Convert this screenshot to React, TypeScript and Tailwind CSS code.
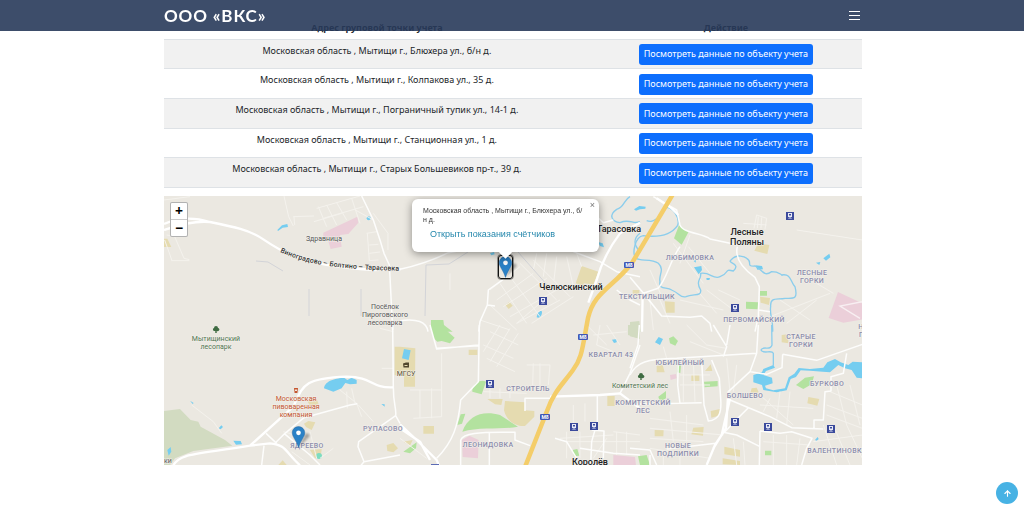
import React from "react";
import { ArrowUp } from "lucide-react";

type Shape = { d: string; c: string };
type Tile = { x: number; y: number; areas: Shape[]; minor: string; streets: string; main: string; water?: string };

const WATER = "#75cdf0";
const GREEN = "#b3e29f";
const WOOD = "#d2dbc1";
const SAND = "#e5dbb0";
const PINK = "#ebcfd9";

const tiles: Tile[] = [
  {
    x: 160,
    y: 190,
    areas: [
      { c: PINK, d: "M490 128 L592 80 L595 98 L565 132 L540 135 L545 170 L512 177 L504 150 L490 148Z" },
      { c: WATER, d: "M352 120 L366 106 L382 102 L384 111 L368 113 L354 123Z" },
      { c: WATER, d: "M620 85 a6 6 0 1 0 12 0 a6 6 0 1 0 -12 0Z" },
      { c: SAND, d: "M12 146 L22 146 L34 171 L12 171Z" },
    ],
    minor:
      "M14 150 L36 212 M20 135 L44 140 L72 205 L88 209 M34 212 L88 212 M372 18 L386 80 L400 108 M400 80 L462 78 M402 80 L404 105 M470 55 L600 18 M475 50 L500 110 M500 45 L530 105 M530 38 L560 90 M490 85 L610 50 M462 95 L545 70 M575 25 L600 100 M620 130 L650 125 M622 130 L628 212 L655 210 M640 70 L684 130 L684 180 M628 165 L655 163 M628 190 L660 186 M586 60 L640 90 M12 30 L90 20",
    streets: "M605 18 L640 90 L660 150 L672 190 L688 225 L690 260 L694 340 L698 420",
    main: "M12 102 C60 80 110 84 150 96 C220 110 270 120 310 148 C350 175 375 188 400 197 C460 222 560 235 640 240 L722 238 M12 120 C60 105 100 92 150 96",
  },
  {
    x: 400,
    y: 190,
    areas: [
      { c: SAND, d: "M545 228 L595 245 L580 284 L552 280 L548 288 L527 280Z" },
      { c: SAND, d: "M316 345 L328 335 L338 347 L326 357Z" },
      { c: WATER, d: "M410 382 C412 364 425 358 426 366 C426 376 420 386 410 382Z" },
      { c: GREEN, d: "M93 390 L130 390 L132 405 L158 425 L93 425Z" },
      { c: WATER, d: "M270 190 L282 186 L284 193 L274 196Z" },
      { c: WATER, d: "M594 156 L608 160 L612 172 L600 168Z" },
    ],
    minor:
      "M360 220 L470 330 M400 210 L510 320 M330 260 L420 380 M300 280 L380 400 M270 345 L350 420 M270 300 L360 230 M290 330 L400 250 M310 350 L440 265 M330 380 L470 300 M350 400 L480 330 M395 400 L520 320 M240 390 L330 420 M440 190 L430 260 M470 200 L462 270 M500 200 L520 290 M410 190 L400 240 M350 400 L420 340 M530 190 L545 230 M150 250 L150 300",
    streets:
      "M0 238 C60 225 110 205 145 188 L190 180 M318 262 L265 300 L262 345 L240 395 L236 425 M262 345 L285 348 M720 260 L650 245 L600 215 L520 185 M0 392 C50 385 80 395 84 425 M640 90 L610 98 L590 80 M650 300 L690 330 L720 345",
    main: "M720 98 L660 130 C630 170 605 215 590 270 L565 338",
    water: "M690 20 C670 30 675 50 650 58 C625 75 635 95 660 98 C690 85 700 105 720 95 M720 130 C700 145 700 165 720 185",
  },
  {
    x: 630,
    y: 190,
    areas: [
      { c: GREEN, d: "M147 106 L176 125 L155 164 L132 145Z" },
      { c: SAND, d: "M385 160 L418 165 L412 192 L373 182Z" },
      { c: GREEN, d: "M348 335 L384 337 L383 358 L348 356Z M390 303 L411 303 L411 317 L390 317Z" },
      { c: SAND, d: "M390 320 L420 324 L417 345 L392 338Z M104 334 L134 336 L134 368 L108 368Z M8 300 L28 300 L28 318 L8 318Z" },
      { c: PINK, d: "M624 306 L697 340 L697 388 L640 398 L596 384Z" },
      { c: WATER, d: "M192 232 L214 228 L216 240 L206 253Z M376 226 L396 228 L399 238 L382 239Z M580 205 L598 191 L601 202 L588 212Z M558 218 L571 216 L568 225Z M190 212 L198 210 L197 218Z M229 264 L240 264 L238 270 L230 270Z M12 58 L28 48 L47 50 L46 56 L30 58 L18 62Z" },
      { c: WOOD, d: "M0 396 L28 393 L32 425 L0 425Z" },
    ],
    minor:
      "M372 115 L380 75 L410 85 L405 118 M385 80 L382 115 M395 82 L393 115 M340 100 L410 105 M130 160 L220 280 M175 170 L240 250 M150 330 L280 360 M200 300 L260 370 M90 330 L120 400 M230 300 L310 360 M265 300 L330 330 M420 380 L600 310 M470 400 L560 330 M60 240 L100 330 M500 120 L697 150 M610 310 L560 280 M450 330 L540 390 M180 135 L150 220 M60 330 L70 420",
    streets:
      "M70 20 L140 60 L150 105 C160 130 220 130 240 147 L325 165 M322 170 C315 200 330 230 375 262 L388 290 L385 380 L375 425 M0 262 L45 315 L95 378 L180 382 L215 378 L240 400 L245 425 M95 378 L40 310 L84 295 C110 270 120 210 150 170 M385 360 L420 365",
    main: "M38 310 L36 425 M80 25 L125 55 L145 75",
    water:
      "M18 205 C5 190 15 140 40 137 C80 142 120 140 143 106 C150 85 130 50 105 52 M50 92 C70 100 75 85 92 80 M18 205 C30 215 65 205 85 220 C105 240 85 255 90 275 C85 300 110 290 125 300 C150 310 150 325 168 320 C190 310 215 320 212 300 C195 270 215 270 212 250 C240 245 250 270 270 260 C300 250 280 235 310 243 C335 220 290 220 303 210 C320 190 345 200 350 205 C370 215 345 230 375 228 C400 240 400 262 425 245 C450 245 460 260 455 255 C485 250 480 275 495 290 C505 330 490 325 465 325 C440 330 420 320 422 350 C418 375 430 390 428 425",
  },
  {
    x: 160,
    y: 325,
    areas: [
      { c: WOOD, d: "M12 258 L60 252 L92 285 L115 290 L122 305 L195 345 L217 362 L100 378 L45 400 L30 421 L12 421Z" },
      { c: WATER, d: "M492 190 C495 165 530 160 552 158 L562 165 L575 158 L590 165 L590 176 L570 178 L556 174 L545 190 L520 200Z M220 347 L242 348 L246 358 L228 359Z M22 375 L32 366 L34 380 L26 392Z M176 310 L184 301 L189 306 L182 313Z M90 227 L101 234 L98 237Z M664 237 L674 238 L674 245Z" },
      { c: SAND, d: "M432 296 L445 288 L466 292 L455 315 L438 306Z M440 225 L470 222 L476 238 L450 242Z M450 375 L485 372 L482 398 L465 400Z M355 420 L368 406 L380 420Z M680 360 L700 354 L714 370 L700 382 L682 378Z M704 65 L720 65 L720 155 L704 150Z" },
      { c: "#7edcc0", d: "M468 393 a9 9 0 1 0 18 0 a9 9 0 1 0 -18 0Z" },
    ],
    minor:
      "M95 240 L160 290 L185 325 M540 195 L590 235 L605 275 M560 200 L562 250 M575 190 L585 235 M595 240 L640 290 M665 130 L700 130 M660 10 L700 20 M395 380 L450 420 M370 320 L440 340 M450 320 L470 400 M480 400 L520 370",
    streets:
      "M345 355 L375 325 L432 278 L570 240 L592 236 M318 325 L350 355 M372 325 L450 390 L480 420 M312 362 L305 420 M698 0 L700 187 C700 240 710 250 707 272 L720 295 M707 272 L596 350 L594 365 L612 410 L720 390 M612 410 L600 425",
    main: "M40 421 C60 385 100 390 270 362 L330 355 C380 360 375 380 420 421 M270 362 L400 245 C430 180 430 160 560 155 C640 155 630 190 700 187",
  },
  {
    x: 400,
    y: 325,
    areas: [
      { c: GREEN, d: "M92 5 L130 0 L132 10 L164 38 L150 55 L125 48 L112 50 L100 38Z M217 200 C215 180 240 160 258 170 L245 208Z M172 300 L182 268 L196 266 L186 296Z M187 320 C205 270 250 255 300 270 L354 305 C310 315 240 305 187 320Z M10 380 L50 352 L48 370 L30 385Z M518 375 L532 372 L538 392 L522 394Z" },
      { c: SAND, d: "M0 65 L46 70 L45 185 L12 185 L12 150 L0 150Z M206 74 L232 74 L232 90 L206 90Z M262 222 L308 222 L304 240 L285 238Z M315 228 L375 232 L375 256 L403 258 L403 275 L375 303 C350 305 320 290 312 256Z M70 303 L102 303 L102 326 L70 326Z M622 213 L644 213 L644 243 L622 243Z M10 350 L38 345 L30 362Z" },
      { c: WATER, d: "M12 72 L32 76 L26 105 L6 100Z M636 44 L650 42 L650 52 L642 54Z" },
      { c: PINK, d: "M186 345 L208 332 L236 345 L234 400 L188 396Z M640 390 L705 396 L708 420 L640 420Z" },
      { c: WOOD, d: "M684 0 L720 0 L720 42 L684 30Z" },
    ],
    minor:
      "M250 60 L340 100 M260 100 L345 140 M270 20 L355 60 M300 0 L250 80 M330 10 L270 110 M355 25 L290 125 M380 120 L450 120 L445 180 M400 115 L398 180 M420 115 L420 180 M250 200 L380 205 M270 190 L270 220 M300 190 L300 220 M330 190 L330 220 M30 195 L125 195 L125 275 L40 280 M60 195 L60 280 M95 190 L95 280 M125 85 L125 195 M560 0 L620 60 M600 0 L590 60 L640 80 M580 30 L680 20 M620 0 L660 60 M480 340 L640 330 M500 320 L500 400 M540 320 L540 400 M580 400 L620 340 M640 320 L720 330 M650 320 L650 390 M680 320 L680 390 M500 350 L720 350 M520 240 L520 300 M555 235 L555 290 M0 340 L80 400",
    streets:
      "M90 0 L110 72 L235 60 M238 0 L235 170 L182 225 C175 300 160 350 110 400 M235 62 L110 70 M375 258 L375 220 L450 220 M182 345 C190 325 230 320 345 322 L345 345 L390 362 M268 325 L268 420 M182 345 L182 420 M592 210 L592 290 L575 350 L572 420 M575 315 L612 318 L610 400 M540 370 L640 385 L720 390 M465 340 L500 350 L530 400 M720 60 L690 145 L660 205",
    main: "M0 298 L50 345 L110 405 L118 425 M0 310 L60 350 L90 405 M450 215 L600 210 L660 205 L720 250",
  },
  {
    x: 630,
    y: 325,
    areas: [
      { c: WATER, d: "M75 52 L86 36 L99 42 L90 60Z M370 150 L396 142 L400 132 L430 120 L435 128 L408 138 L400 150 L426 158 L428 175 L405 182 L408 190 L430 196 L465 190 L476 157 L493 146 L506 129 L540 132 L580 128 L592 112 L615 102 L632 112 L655 120 L668 110 L697 112 L697 160 L680 158 L665 135 L645 130 L625 120 L600 142 L578 140 L540 137 L512 136 L498 156 L482 162 L470 196 L440 202 L400 195 L396 180 L370 172Z M555 345 L563 336 L566 342 L560 348Z" },
      { c: GREEN, d: "M117 40 L130 34 L144 48 L136 62 L120 55Z M143 118 L153 120 L151 144 L141 142Z M222 170 L263 168 L263 184 L224 187Z M85 215 L108 198 L108 220 L90 232Z M498 180 L525 158 L552 154 L545 178 L520 192Z M405 377 L424 377 L424 391 L405 391Z M24 394 L50 390 L60 420 L30 420Z" },
      { c: SAND, d: "M455 30 L475 28 L475 55 L455 52Z M225 138 L242 118 L247 138Z M184 150 L208 150 L208 168 L184 168Z M80 122 L98 120 L104 142 L80 142Z M535 216 L568 222 L562 242 L532 235Z M365 190 L380 188 L386 202 L360 208Z M242 258 L270 252 L266 272 L244 278Z M190 308 L221 306 L219 332 L184 328Z M74 315 L101 316 L100 334 L74 334Z M283 365 L330 375 L330 395 L283 388Z M278 400 L330 408 L330 420 L278 418Z" },
      { c: PINK, d: "M120 150 L138 147 L140 160 L122 165Z M0 398 L14 400 L14 420 L0 420Z" },
      { c: WOOD, d: "M0 0 L28 0 L24 40 L0 34Z" },
    ],
    minor:
      "M100 65 L110 100 M170 0 L230 60 L290 70 M180 50 L280 90 M290 100 L300 200 M320 120 L310 200 M160 120 L160 230 M190 105 L195 230 M150 180 L240 180 M150 150 L240 150 M60 280 L220 300 M60 310 L280 330 M120 260 L130 350 M170 270 L170 350 M60 340 L220 350 M390 210 L490 300 M420 220 L400 260 M450 200 L440 280 M480 200 L470 300 M390 240 L550 250 M600 200 L697 240 M620 180 L650 300 M660 180 L690 300 M590 240 L697 280 M590 270 L697 310 M580 300 L620 420 M610 300 L660 420 M650 300 L697 400 M550 350 L697 330 M540 380 L697 370 M310 340 L320 420 M340 350 L345 420 M400 350 L540 360 M430 330 L430 420 M470 330 L470 420 M510 340 L500 420 M60 370 L240 400 M100 380 L100 420 M150 380 L150 420",
    streets:
      "M0 150 C20 110 50 102 140 100 L380 85 L385 0 M250 0 L290 65 L280 95 M300 0 L290 60 M145 105 L143 180 L150 235 L0 238 M215 105 L222 240 L235 288 C270 285 275 260 272 220 L268 160 L245 105 M150 235 L215 233 M380 85 L360 140 L295 200 M362 140 L410 148 L456 128 L458 88 M458 88 L560 106 L697 58 M300 225 L420 275 L485 308 L580 312 M552 312 L552 285 L580 285 L585 200 L603 198 L603 155 L640 145 L650 85 M355 248 L325 278 L285 320 M390 318 L388 420 M390 318 L450 325 L485 320 L546 340 L530 370 L515 420 M280 322 L320 330 L390 365 M0 370 L60 375 L80 420 M110 372 L258 355 M60 390 L60 420 M28 0 L24 60 L0 130",
    main: "M295 200 L288 310 L255 360 L230 420 M300 222 L284 290 L275 330 L250 370",
    water: "M425 0 L426 60 C420 80 400 60 393 75 C400 90 425 72 430 85 L430 122",
  },
];

type Label = { x: number; y: number; lines: string[]; kind: "district" | "village" | "town" | "park" | "brewery" | "school" };

const labels: Label[] = [
  { x: 324, y: 241, lines: ["Здравница"], kind: "village" },
  { x: 385, y: 309, lines: ["Посёлок", "Пироговского", "лесопарка"], kind: "village" },
  { x: 619, y: 232, lines: ["Тарасовка"], kind: "town" },
  { x: 571, y: 290, lines: ["Челюскинский"], kind: "town" },
  { x: 747, y: 235, lines: ["Лесные", "Поляны"], kind: "town" },
  { x: 590, y: 465, lines: ["Королёв"], kind: "town" },
  { x: 690, y: 260, lines: ["ЛЮБИМОВКА"], kind: "district" },
  { x: 812, y: 275, lines: ["ЛЕСНЫЕ", "ГОРКИ"], kind: "district" },
  { x: 647, y: 299, lines: ["ТЕКСТИЛЬЩИК"], kind: "district" },
  { x: 754, y: 322, lines: ["ПЕРВОМАЙСКИЙ"], kind: "district" },
  { x: 801, y: 339, lines: ["СТАРЫЕ", "ГОРКИ"], kind: "district" },
  { x: 611, y: 357, lines: ["КВАРТАЛ 43"], kind: "district" },
  { x: 680, y: 365, lines: ["ЮБИЛЕЙНЫЙ"], kind: "district" },
  { x: 528, y: 391, lines: ["СТРОИТЕЛЬ"], kind: "district" },
  { x: 643, y: 405, lines: ["КОМИТЕТСКИЙ", "ЛЕС"], kind: "district" },
  { x: 745, y: 398, lines: ["БОЛШЕВО"], kind: "district" },
  { x: 827, y: 386, lines: ["БУРКОВО"], kind: "district" },
  { x: 678, y: 448, lines: ["НОВЫЕ", "ПОДЛИПКИ"], kind: "district" },
  { x: 837, y: 453, lines: ["ВАЛЕНТИНОВКА"], kind: "district" },
  { x: 488, y: 447, lines: ["ЛЕОНИДОВКА"], kind: "district" },
  { x: 383, y: 431, lines: ["РУПАСОВО"], kind: "district" },
  { x: 307, y: 448, lines: ["ЯДРЕЕВО"], kind: "district" },
  { x: 861, y: 329, lines: ["Н", "Г"], kind: "district" },
  { x: 216, y: 341, lines: ["Мытищинский", "лесопарк"], kind: "park" },
  { x: 640, y: 388, lines: ["Комитетский лес"], kind: "park" },
  { x: 296, y: 401, lines: ["Московская", "пивоваренная", "компания"], kind: "brewery" },
  { x: 406, y: 376, lines: ["МГСУ"], kind: "school" },
  { x: 168, y: 463, lines: ["ки"], kind: "village" },
];

const labelStyle: Record<Label["kind"], string> = {
  district: "text-[7px] font-medium fill-[#8b8cab] tracking-wider",
  village: "text-[7px] fill-[#555555]",
  town: "text-[9px] font-medium fill-[#222222]",
  park: "text-[7px] fill-[#4f7350]",
  brewery: "text-[7px] fill-[#c4562f]",
  school: "text-[7px] fill-[#5b5033]",
};

const stations = [
  [790, 216], [735, 308], [543, 301], [490, 384], [574, 427], [594, 426], [735, 422], [768, 427], [831, 429],
];
const shields = [[629, 265], [583, 337], [545, 417]];
const trees = [[216, 330], [641, 377]];

function CityMap() {
  return (
    <svg viewBox="164 196 698 269" preserveAspectRatio="xMidYMid slice" className="block h-full w-full bg-[#ebe8e1]" role="img" aria-label="Карта">
      <defs>
        <path id="road-name" d="M280 252 C310 266 345 270 412 271" />
      </defs>
      {tiles.map((t) => (
        <g key={`${t.x}-${t.y}`} transform={`translate(${t.x} ${t.y}) scale(0.33333)`} fill="none" strokeLinejoin="round">
          {t.areas.map((a, i) => <path key={i} d={a.d} fill={a.c} />)}
          <path d={t.minor} stroke="#f4f2ed" strokeWidth="3" />
        </g>
      ))}
      {tiles.map((t) => (
        <g key={`${t.x}-${t.y}`} transform={`translate(${t.x} ${t.y}) scale(0.33333)`} fill="none" strokeLinejoin="round">
          {t.water && <path d={t.water} stroke="#8bcdec" strokeWidth="4" />}
          <path d={t.streets} stroke="#fdfdfc" strokeWidth="4.5" />
          <path d={t.main} stroke="#ffffff" strokeWidth="7" />
        </g>
      ))}
      <g transform="translate(630 190) scale(0.33333)" fill="none" stroke="#f8eff2" strokeWidth="4">
        <path d="M697 335 L630 348 L690 385" />
      </g>
      <g fill="none" stroke="#d3d4d8" strokeWidth="1">
        <path d="M256 261 L268 262 L283 271 M309 289 L309 316 M361 289 L361 316 M425 316 L426 265 L449 264 L468 252 M518 252 L548 286" />
      </g>
      <path d="M673 194 L632 263 C612 288 594 292 588 318 C582 350 582 358 573 370 C563 384 554 391 547 411 L525 467" fill="none" stroke="#f4cd69" strokeWidth="4.5" />
      {shields.map(([x, y]) => (
        <g key={`${x}-${y}`}>
          <rect x={x - 5} y={y - 3} width="10" height="6" rx="1" fill="#4257b4" />
          <text x={x} y={y + 2} textAnchor="middle" className="fill-white font-['Roboto',sans-serif] text-[5px] font-bold">M8</text>
        </g>
      ))}
      <rect x="431" y="464" width="8" height="3" fill="#5d6cb5" />
      {stations.map(([x, y]) => (
        <g key={`${x}-${y}`}>
          <rect x={x - 4} y={y - 4} width="8" height="8" fill="#3b4a9c" />
          <path d={`M${x - 2} ${y - 3}h4v4h-4z M${x - 2} ${y + 2.5}l1 -1h2l1 1z`} fill="#e8eaf6" />
          <rect x={x - 1} y={y - 2} width="2" height="1.5" fill="#3b4a9c" />
        </g>
      ))}
      {trees.map(([x, y]) => (
        <path key={`${x}-${y}`} d={`M${x - 3} ${y}a1.5 1.5 0 0 1 1 -2a2 2 0 0 1 4 0a1.5 1.5 0 0 1 1 2.5q-1 1 -2.3 .5v2h-1.4v-2q-2 .4 -2.3 -1z`} fill="#3f6b42" />
      ))}
      <path d="M294 388h4l-.6 5h-2.8z" fill="#c4562f" />
      <path d="M295 389.5h2v1.5h-2z" fill="#f4e6df" />
      <path d="M403 363.500l3 -1h3v5h-5.5z" fill="#51472c" />
      <path d="M404.5 365h3v1h-3z" fill="#e5dbb0" />
      <g className="font-['Roboto','Noto_Sans',sans-serif]" stroke="#f2f0eb" strokeWidth="1.2" paintOrder="stroke" strokeLinejoin="round" textAnchor="middle">
        <text textAnchor="start" className="fill-[#333333] text-[7px] font-medium">
          <textPath href="#road-name">Виноградово – Болтино – Тарасовка</textPath>
        </text>
        {labels.map((l) => (
          <text key={l.lines[0]} y={l.y} className={labelStyle[l.kind]}>
            {l.lines.map((line, i) => (
              <tspan key={line} x={l.x} dy={i === 0 ? 0 : l.kind === "town" ? 10 : 8}>{line}</tspan>
            ))}
          </text>
        ))}
      </g>
    </svg>
  );
}

function Pin() {
  return (
    <svg viewBox="0 0 25 41" className="block h-[22px] w-[13px] overflow-visible" aria-hidden="true">
      <path d="M13 40 L33 20 Q36 12 26 14 Z" fill="#000000" opacity="0.3" className="blur-[2px]" />
      <path d="M12.5 .5C5.9 .5 .5 5.9 .5 12.5C.5 20 9 28 12.5 40.5C16 28 24.5 20 24.5 12.5C24.5 5.9 19.1 .5 12.5 .5Z" fill="#2a81c6" stroke="#2469a5" />
      <circle cx="12.5" cy="12.5" r="4.5" fill="#ffffff" />
    </svg>
  );
}

const addresses = [
  "Московская область , Мытищи г., Блюхера ул., б/н д.",
  "Московская область , Мытищи г., Колпакова ул., 35 д.",
  "Московская область , Мытищи г., Пограничный тупик ул., 14-1 д.",
  "Московская область , Мытищи г., Станционная ул., 1 д.",
  "Московская область , Мытищи г., Старых Большевиков пр-т., 39 д.",
];

export default function App() {
  return (
    <div className="min-h-screen bg-white font-['Noto_Sans','Open_Sans',sans-serif] text-[#212529]">
      <header className="fixed inset-x-0 top-0 z-20 bg-[#283a5a]/90 pl-0.5">
        <div className="mx-auto flex h-[31px] max-w-[698px] items-center justify-between">
          <a href="#top" className="font-['Lato','Open_Sans',sans-serif] text-[17px] leading-5 font-bold tracking-wider text-white">ООО «ВКС»</a>
          <button type="button" aria-label="Меню" className="mr-0.5 flex w-[11px] flex-col gap-[3px]">
            <span className="h-px w-full bg-white" />
            <span className="h-px w-full bg-white" />
            <span className="h-px w-full bg-white" />
          </button>
        </div>
      </header>

      <main id="top" className="pt-[18px] pl-0.5">
        <div className="mx-auto max-w-[698px]">
          <table className="h-[170px] w-full border-collapse text-center text-[9px]">
            <thead>
              <tr className="h-[21px]">
                <th className="w-[61%] border-b border-[#dee2e6] align-middle leading-3 font-bold">Адрес груповой точки учета</th>
                <th className="border-b border-[#dee2e6] align-middle leading-3 font-bold">Действие</th>
              </tr>
            </thead>
            <tbody>
              {addresses.map((a) => (
                <tr key={a} className="border-b border-[#dee2e6] odd:bg-[#f1f1f1]">
                  <td className="pt-[5px] align-top leading-3">{a}</td>
                  <td className="pt-1 pb-[3px] align-middle">
                    <button type="button" className="mx-auto block h-[21px] rounded-[3px] bg-[#0d6efd] px-[5px] text-[9px] leading-3 text-white">
                      Посмотреть данные по объекту учета
                    </button>
                  </td>
                </tr>
              ))}
            </tbody>
          </table>

          <section aria-label="Карта объектов" className="relative mt-2 h-[269px] overflow-hidden">
            <CityMap />
            <div className="absolute top-[6px] left-[6px] flex w-[18px] flex-col rounded-[2px] border border-black/30 bg-white text-[14px] font-bold text-black">
              <button type="button" aria-label="Приблизить" className="h-[17px] border-b border-[#cccccc] leading-[14px]">+</button>
              <button type="button" aria-label="Отдалить" className="h-4 leading-[14px]">−</button>
            </div>

            <button type="button" aria-label="Объект: Ядреево" className="absolute top-[230px] left-[128px]"><Pin /></button>
            <button type="button" aria-label="Объект: Блюхера ул." className="absolute top-[59px] left-[334px] rounded-[3px] border border-[#111111] outline outline-[#111111]/40"><Pin /></button>

            <div className="absolute top-[3px] left-[248px] w-[187px] font-['Liberation_Sans',sans-serif] drop-shadow-[0_2px_4px_rgba(0,0,0,0.4)]">
              <div className="relative z-10 h-[53px] rounded-md bg-white px-[11px] pt-[7px] text-[#333333]">
                <p className="text-[7px] leading-[9px]">Московская область , Мытищи г., Блюхера ул., б/<br />н д.</p>
                <a href="#readings" className="mt-1 ml-[7px] block text-[9px] leading-3 text-[#2487ac]">Открыть показания счётчиков</a>
                <button type="button" aria-label="Закрыть" className="absolute top-[2px] right-[4px] text-[9px] leading-[9px] text-[#757575]">×</button>
              </div>
              <div className="mx-auto -mt-1 h-[9px] w-[9px] rotate-45 bg-white" />
            </div>
          </section>
        </div>
      </main>

      <a href="#top" aria-label="Наверх" className="fixed right-[6px] bottom-[4px] z-20 flex h-[22px] w-[22px] items-center justify-center rounded-full bg-[#47b2e4] text-white">
        <ArrowUp size={9} strokeWidth={3} />
      </a>
    </div>
  );
}
